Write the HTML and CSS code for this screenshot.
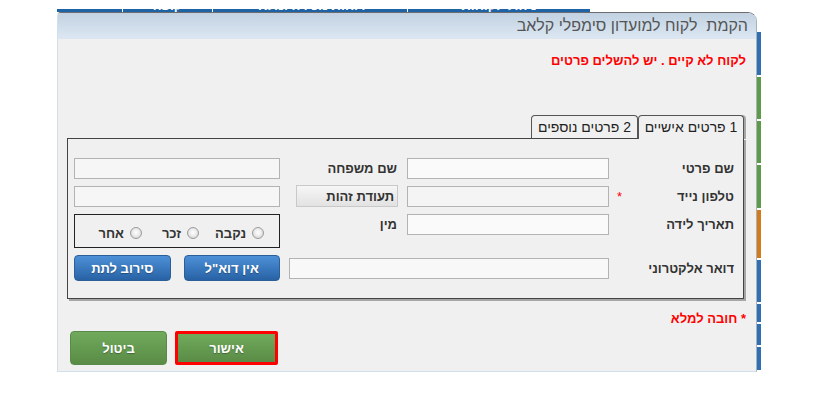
FILE: index.html
```html
<!DOCTYPE html>
<html lang="he">
<head>
    <meta charset="UTF-8">
    <meta name="viewport" content="width=device-width, initial-scale=1.0">
    <title>הקמת לקוח</title>
    <link rel="stylesheet" href="styles.css">
</head>
<body>
    <!-- page behind the dialog -->
    <div class="page-top">
        <div class="topnav" dir="rtl">
            <div class="nav-item nav-d"><span>ניהול לקוחות</span></div>
            <div class="nav-item nav-c"><span>דוחות מכירה ומלאי</span></div>
            <div class="nav-item nav-b"><span>קופה</span></div>
            <div class="nav-item nav-a"><span></span></div>
        </div>
    </div>
    <div class="side-strip">
        <span class="seg blue s43"></span>
        <span class="seg green s42"></span>
        <span class="seg green s42"></span>
        <span class="seg green s43"></span>
        <span class="seg orange s48"></span>
        <span class="seg blue s42"></span>
        <span class="seg blue s18"></span>
        <span class="seg blue s21"></span>
        <span class="seg blue s23"></span>
    </div>

    <div class="dialog" dir="rtl">
        <div class="dialog-head">הקמת&nbsp; לקוח למועדון סימפלי קלאב</div>
        <div class="dialog-body">
            <div class="error">לקוח לא קיים . יש להשלים פרטים</div>

            <div class="tabs">
                <div class="tab active">1 פרטים אישיים</div>
                <div class="tab">2 פרטים נוספים</div>
            </div>

            <div class="panel">
                <div class="form-grid">
                    <div class="lbl">שם פרטי</div>
                    <input class="field" type="text">
                    <div class="mid"><span class="mid-lbl">שם משפחה</span></div>
                    <div class="left"><input class="field wide" type="text"></div>

                    <div class="lbl">טלפון נייד <span class="req">*</span></div>
                    <input class="field shade" type="text">
                    <div class="mid"><button class="id-btn" type="button">תעודת זהות</button></div>
                    <div class="left"><input class="field wide" type="text"></div>

                    <div class="lbl">תאריך לידה</div>
                    <input class="field" type="text">
                    <div class="mid"><span class="mid-lbl">מין</span></div>
                    <div class="left">
                        <div class="gender">
                            <label class="radio"><span class="dot"></span>נקבה</label>
                            <label class="radio"><span class="dot"></span>זכר</label>
                            <label class="radio last"><span class="dot"></span>אחר</label>
                        </div>
                    </div>

                    <div class="lbl mid-row">דואר אלקטרוני</div>
                    <input class="field email" type="text">
                    <div class="left buttons">
                        <button class="btn blue-btn" type="button">אין דוא"ל</button>
                        <button class="btn blue-btn" type="button">סירוב לתת</button>
                    </div>
                </div>
            </div>

            <div class="must">* חובה למלא</div>

            <div class="actions">
                <button class="btn green-btn ok" type="button">אישור</button>
                <button class="btn green-btn cancel" type="button">ביטול</button>
            </div>
        </div>
    </div>
</body>
</html>
```

FILE: styles.css
```css
body {
    margin: 0;
    padding: 0 0 0 57px;
    background: #ffffff;
    font-family: 'Liberation Sans', Arial, 'DejaVu Sans', sans-serif;
    color: #333;
    height: 402px;
    box-sizing: border-box;
    overflow: hidden;
}

/* Background page */
.page-top {
    height: 12px;
    overflow: hidden;
}

.topnav {
    width: 533px;
    height: 3px;
    margin-top: 9px;
    overflow: hidden;
    background: #1f63a7;
    display: flex;
}

.nav-item {
    height: 3px;
    overflow: hidden;
    border-left: 1px solid #ffffff;
    color: #ffffff;
    font-size: 13px;
    font-weight: bold;
    text-align: center;
    box-sizing: border-box;
}

.nav-item span {
    display: block;
    line-height: 14px;
    margin-top: -10px;
}

.nav-a { width: 65px; border-left: 0; }
.nav-b { width: 90px; }
.nav-c { width: 195px; }
.nav-d { width: 183px; }

.side-strip {
    position: absolute;
    left: 757px;
    top: 32px;
    width: 4px;
    display: flex;
    flex-direction: column;
    gap: 2px;
}

.seg { display: block; }
.seg.blue { background: #2f6fb2; }
.seg.green { background: #5f9a48; }
.seg.orange { background: #d37a1c; }
.s18 { height: 18px; }
.s21 { height: 21px; }
.s23 { height: 23px; }
.s42 { height: 42px; }
.s43 { height: 43px; }
.s48 { height: 48px; }

/* Dialog */
.dialog {
    position: relative;
    z-index: 1;
    width: 700px;
    box-sizing: border-box;
    border: 1px solid #d3dfeb;
    border-top-color: #6d6d6d;
    border-right-color: #a7b2bd;
    border-radius: 4px 9px 0 0;
    background: #f0f0f0;
    overflow: hidden;
}

.dialog-head {
    height: 26px;
    line-height: 26px;
    padding-right: 8px;
    background: linear-gradient(#c2d2e2, #dce7f2);
    color: #555;
    font-size: 16px;
}

.dialog-body {
    padding: 14px 10px 6px 9px;
}

.error {
    color: #ff0000;
    font-weight: bold;
    font-size: 13px;
    line-height: 16px;
}

/* Tabs */
.tabs {
    display: flex;
    align-items: flex-start;
    margin: 46px 2px 0 0;
}

.tab {
    width: 107px;
    height: 23px;
    box-sizing: border-box;
    border: 1px solid #555;
    border-bottom: 0;
    border-radius: 4px 4px 0 0;
    text-align: center;
    font-size: 14px;
    line-height: 22px;
    color: #222;
}

.tab.active {
    width: 106px;
    height: 24px;
    margin-bottom: -1px;
    position: relative;
    z-index: 1;
    background: #f0f0f0;
    box-shadow: 2px 0 0 #a6a6a6;
}

.panel {
    margin-right: 2px;
    border: 1px solid #444;
    box-shadow: 2px 2px 0 #a6a6a6;
    padding: 19px 9px 17px 6px;
}

.form-grid {
    display: grid;
    grid-template-columns: 125px 202px 111px 222px;
    row-gap: 7px;
    align-items: start;
}

.lbl {
    display: flex;
    justify-content: space-between;
    font-weight: bold;
    font-size: 13px;
    line-height: 21px;
    color: #333;
}

.req {
    color: #ff0000;
    font-weight: normal;
    margin-left: 8px;
}

.field {
    display: block;
    width: 202px;
    height: 21px;
    margin: 0;
    padding: 0 3px;
    box-sizing: border-box;
    border: 1px solid #b3b3b3;
    background: #fafafa;
    font: inherit;
}

.field.shade { background: #f4f4f4; }
.field.wide { width: 206px; background: #f6f6f6; }

.mid { padding-right: 9px; }

.mid-lbl {
    display: block;
    padding-right: 1px;
    font-weight: bold;
    font-size: 13px;
    line-height: 21px;
    color: #333;
}

.id-btn {
    display: block;
    width: 102px;
    height: 22px;
    margin: -1px 0 0 0;
    padding: 0 3px;
    border: 1px solid #c9c9c9;
    background: linear-gradient(#f6f6f6, #e2e2e2);
    font-family: inherit;
    font-weight: bold;
    font-size: 13px;
    color: #333;
    text-align: right;
}

.left { padding-right: 16px; }

.gender {
    width: 206px;
    height: 34px;
    box-sizing: border-box;
    border: 1px solid #222;
    display: flex;
    align-items: center;
    gap: 16px;
    padding: 4px 15px 0 0;
}

.radio {
    display: flex;
    align-items: center;
    gap: 6px;
    font-weight: bold;
    font-size: 13px;
    color: #333;
}

.radio.last { margin-right: 4px; }

.dot {
    width: 12px;
    height: 12px;
    box-sizing: border-box;
    border-radius: 50%;
    border: 1px solid #9c9c9c;
    background: radial-gradient(circle at 50% 45%, #ffffff 0, #ececec 45%, #c9c9c9 100%);
}

.mid-row { align-self: center; }

.field.email {
    grid-column: span 2;
    align-self: center;
    width: 320px;
    background: #f8f8f8;
}

.buttons {
    display: flex;
    gap: 13px;
}

.btn {
    width: 97px;
    border-radius: 4px;
    color: #ffffff;
    font-family: inherit;
    font-weight: bold;
    font-size: 13px;
    text-shadow: 0 1px 1px rgba(0, 0, 0, 0.3);
    padding: 0;
}

.blue-btn {
    height: 26px;
    border: 1px solid #2a5f97;
    background: linear-gradient(#4d90d7, #2862a5);
}

.must {
    margin-top: 12px;
    color: #ff0000;
    font-weight: bold;
    font-size: 13px;
    line-height: 16px;
}

.actions {
    display: flex;
    justify-content: flex-end;
    gap: 8px;
    margin-top: 4px;
    padding-left: 3px;
}

.green-btn {
    height: 34px;
    background: linear-gradient(#70aa5c, #5a8b46);
}

.cancel {
    border: 1px solid #5a8a48;
}

.ok {
    width: 103px;
    border: 3px solid #ff0000;
    border-radius: 2px;
}
```
